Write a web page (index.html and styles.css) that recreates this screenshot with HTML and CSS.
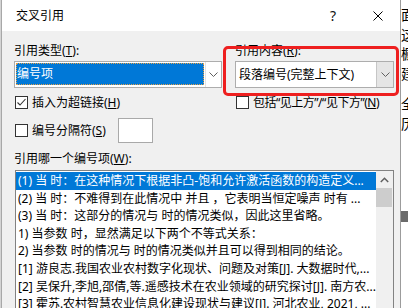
FILE: index.html
```html
<!DOCTYPE html>
<html lang="zh-CN">
<head>
<meta charset="utf-8">
<title>交叉引用</title>
<link rel="stylesheet" href="styles.css">
</head>
<body>
<div class="screen">
  <div class="edge"></div>
  <div class="dialog">
    <div class="titlebar">
      <span class="title">交叉引用</span>
      <span class="help">?</span>
      <span class="close"><svg width="10" height="10" viewBox="0 0 10 10"><path d="M0.5 0.5L9.5 9.5M9.5 0.5L0.5 9.5" stroke="#000" stroke-width="1" fill="none"/></svg></span>
    </div>
    <div class="body">
      <div class="grid top">
        <div class="label">引用类型(<u>T</u>):</div>
        <div class="label">引用内容(<u>R</u>):</div>
        <div class="combo">
          <div class="combo-text sel">编号项</div>
          <div class="combo-btn"><svg width="9" height="5" viewBox="0 0 9 5"><path d="M0.5 0.5L4.5 4.5L8.5 0.5" stroke="#606060" fill="none"/></svg></div>
        </div>
        <div class="combo">
          <div class="combo-text">段落编号(完整上下文)</div>
          <div class="combo-btn grey"><svg width="9" height="5" viewBox="0 0 9 5"><path d="M0.5 0.5L4.5 4.5L8.5 0.5" stroke="#606060" fill="none"/></svg></div>
        </div>
      </div>
      <div class="grid checks">
        <div class="check"><span class="box"><svg width="11" height="11" viewBox="0 0 11 11"><path d="M1.5 5.5L4 8L9.5 2" stroke="#333" stroke-width="1.1" fill="none"/></svg></span>插入为超链接(<u>H</u>)</div>
        <div class="check"><span class="box"></span><span class="tight">包括“见上方”/“见下方”(<u>N</u>)</span></div>
      </div>
      <div class="sep">
        <div class="check sep-check"><span class="box"></span>编号分隔符(<u>S</u>)</div>
        <div class="input"></div>
      </div>
      <div class="label which">引用哪一个编号项(<u>W</u>):</div>
      <div class="list">
        <div class="items">
          <div class="item selected">(1) 当 时：在这种情况下根据非凸-饱和允许激活函数的构造定义...</div>
          <div class="item">(2) 当 时：不难得到在此情况中 并且 ，它表明当恒定噪声 时有 ...</div>
          <div class="item">(3) 当 时：这部分的情况与 时的情况类似，因此这里省略。</div>
          <div class="item">1) 当参数 时，显然满足以下两个不等式关系：</div>
          <div class="item">2) 当参数 时的情况与 时的情况类似并且可以得到相同的结论。</div>
          <div class="item">[1] 游良志.我国农业农村数字化现状、问题及对策[J]. 大数据时代,...</div>
          <div class="item">[2] 吴保升,李旭,邵倩,等.遥感技术在农业领域的研究探讨[J]. 南方农...</div>
          <div class="item">[3] 霍苏.农村智慧农业信息化建设现状与建议[J]. 河北农业, 2021, ...</div>
        </div>
        <div class="scrollbar">
          <div class="arrow"><svg width="9" height="6" viewBox="0 0 9 6"><path d="M0.8 5L4.5 1.3L8.2 5" stroke="#606060" stroke-width="1.5" fill="none"/></svg></div>
          <div class="thumb"></div>
        </div>
      </div>
    </div>
  </div>
  <div class="doc">
    <div class="doc-text">面<br>这<br>橱<br>建</div>
    <div class="doc-text second">全<br>历</div>
    <div class="doc-bar"></div>
  </div>
  <div class="annot"></div>
</div>
</body>
</html>
```
FILE: styles.css
```css
html, body {
  margin: 0;
  padding: 0;
}
body {
  width: 408px;
  height: 308px;
  overflow: hidden;
  background: #ffffff;
  font-family: "Noto Sans", "Noto Sans CJK SC", sans-serif;
  font-size: 12px;
  color: #000;
}
.screen {
  position: relative;
  display: flex;
  align-items: flex-start;
  width: 408px;
  height: 308px;
  overflow: hidden;
}
.edge {
  width: 1px;
  height: 308px;
  flex-shrink: 0;
  background: #d4d4d4;
}
.dialog {
  width: 398px;
  height: 308px;
  flex-shrink: 0;
  overflow: hidden;
  border-left: 1px solid #a8a8a8;
  border-right: 1px solid #9c9c9c;
  background: #f0f0f0;
}
.titlebar {
  height: 31px;
  background: #ffffff;
  display: flex;
  align-items: center;
  padding: 0 7px 0 14px;
}
.title {
  flex: 1;
  font-size: 12px;
  line-height: 16px;
  margin-top: 1px;
}
.help {
  width: 30px;
  text-align: center;
  font-size: 14px;
  line-height: 16px;
  margin-right: 15px;
  color: #111;
}
.close {
  width: 30px;
  display: flex;
  justify-content: center;
  align-items: center;
}
.body {
  padding: 11px 5px 0 12px;
}
.grid {
  display: grid;
  grid-template-columns: 208px 159px;
  column-gap: 13px;
}
.label {
  line-height: 17px;
  height: 17px;
  white-space: nowrap;
}
.combo {
  margin-top: 2px;
  height: 27px;
  box-sizing: border-box;
  border: 1px solid #adadad;
  background: #ffffff;
  display: flex;
  min-width: 0;
}
.combo-text {
  flex: 1;
  min-width: 0;
  line-height: 25px;
  padding-left: 3px;
  white-space: nowrap;
  overflow: hidden;
}
.combo-text.sel {
  margin: 1px 0 2px 1px;
  background: #0078d7;
  color: #ffffff;
  outline: 1px dotted #e3a24a;
  outline-offset: -1px;
  line-height: 22px;
  padding-left: 1px;
}
.combo-btn {
  width: 15px;
  flex-shrink: 0;
  display: flex;
  align-items: center;
  justify-content: center;
  border-left: 1px solid #e3e3e3;
  margin-left: 1px;
}
.combo-btn.grey {
  width: 16px;
  background: #e5e5e5;
  border-left: 1px solid #c6c6c6;
}
.checks {
  margin-top: 6px;
  height: 17px;
}
.check {
  display: flex;
  align-items: center;
  line-height: 17px;
  white-space: nowrap;
  min-width: 0;
}
.tight {
  letter-spacing: -0.5px;
}
.box {
  width: 13px;
  height: 13px;
  box-sizing: border-box;
  border: 1px solid #333333;
  background: #ffffff;
  margin-left: 1px;
  margin-right: 4px;
  display: flex;
  align-items: center;
  justify-content: center;
  flex-shrink: 0;
}
.sep {
  display: flex;
  margin-top: 7px;
  height: 25px;
  align-items: center;
}
.sep-check {
  width: 104px;
  flex-shrink: 0;
}
.input {
  width: 35px;
  height: 25px;
  flex-shrink: 0;
  box-sizing: border-box;
  border: 1px solid #a9a9a9;
  background: #ffffff;
}
.which {
  margin-top: 7px;
}
.list {
  margin-top: 3px;
  margin-left: 1px;
  width: 379px;
  height: 160px;
  box-sizing: border-box;
  border: 1px solid #828282;
  background: #ffffff;
  display: flex;
}
.items {
  width: 360px;
  flex-shrink: 0;
  padding-top: 1px;
}
.item {
  height: 17.6px;
  line-height: 17.6px;
  padding-left: 2px;
  white-space: nowrap;
  overflow: hidden;
}
.item.selected {
  background: #0078d7;
  color: #ffffff;
}
.scrollbar {
  width: 17px;
  flex-shrink: 0;
  background: #f0f0f0;
}
.arrow {
  height: 17px;
  display: flex;
  align-items: center;
  justify-content: center;
}
.thumb {
  height: 19px;
  margin: 0 1px 0 0;
  background: #cdcdcd;
}
.doc {
  width: 7px;
  height: 308px;
  flex-shrink: 0;
  overflow: hidden;
  font-family: "Noto Sans CJK SC", sans-serif;
}
.doc-text {
  font-size: 14px;
  line-height: 19.5px;
  padding-top: 5px;
  white-space: nowrap;
}
.doc-text.second {
  padding-top: 11px;
}
.doc-bar {
  margin-top: 78px;
  height: 11px;
  background: #6b6b6b;
}
.annot {
  position: absolute;
  left: 223px;
  top: 46px;
  width: 176px;
  height: 50px;
  box-sizing: border-box;
  border: 3px solid #ee1f1f;
  border-radius: 5px;
}
```
